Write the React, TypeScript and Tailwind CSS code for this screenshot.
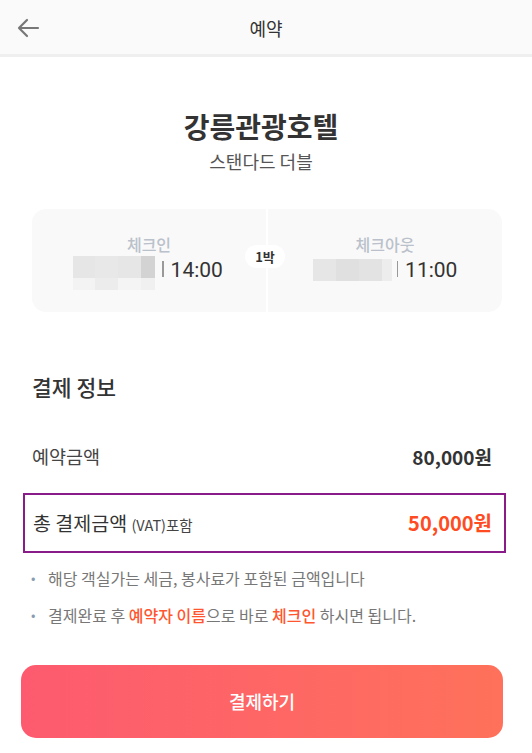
import React from "react";

const font = { fontFamily: '"Noto Sans CJK KR", "Noto Sans", Roboto, sans-serif' };

function Mosaic({ cells, rows }: { cells: number[]; rows: string[][] }) {
  return (
    <div className="flex flex-col">
      {rows.map((r, i) => (
        <div key={i} className="flex" style={{ height: i === 0 ? 22 : 12 }}>
          {r.map((c, j) => (
            <div key={j} style={{ width: cells[j], background: c }} />
          ))}
        </div>
      ))}
    </div>
  );
}

export default function App() {
  return (
    <div className="w-[532px] h-[753px] bg-white text-[#333] overflow-hidden" style={font}>
      {/* Header */}
      <div className="relative h-[57px] bg-[#fafafa] border-b-[3px] border-[#efefef] flex items-center justify-center">
        <svg className="absolute left-[16px] top-[17px]" width="24" height="22" viewBox="0 0 24 22" fill="none">
          <path d="M22 11H3M11 3L3 11L11 19" stroke="#777" strokeWidth="2.2" strokeLinecap="round" strokeLinejoin="round" />
        </svg>
        <span className="text-[18px] text-[#333] leading-none mt-[1px]">예약</span>
      </div>

      {/* Hotel */}
      <div className="flex flex-col items-center pr-[10px] pt-[50px]">
        <div className="text-[28px] font-semibold leading-[38px] text-[#333]">강릉관광호텔</div>
        <div className="text-[18px] leading-[26px] text-[#555] mt-[3px]">스탠다드 더블</div>
      </div>

      {/* Card */}
      <div className="relative ml-[32px] w-[470px] h-[103px] mt-[35px] rounded-[14px] bg-[#f9f9f9] flex">
        <div className="flex-1 flex flex-col items-center pt-[24px]">
          <div className="text-[16px] leading-[22px] font-medium text-[#bac1cb]">체크인</div>
          <div className="flex items-start mt-[1px] -ml-[2px]">
            <Mosaic
              cells={[22, 23, 23, 14]}
              rows={[
                ["#e6e6e6", "#e8e8e8", "#e6e6e6", "#d3d3d3"],
                ["#f3f3f3", "#ececec", "#f4f4f4", "#f0f0f0"],
              ]}
            />
            <div className="w-[1.5px] h-[16px] bg-[#999] ml-[7px] mt-[5px]" />
            <div className="text-[21px] leading-[28px] text-[#333] ml-[7px]" style={{ fontFamily: 'Roboto, "Noto Sans", sans-serif' }}>14:00</div>
          </div>
        </div>
        <div className="w-[2px] bg-white" />
        <div className="flex-1 flex flex-col items-center pt-[24px]">
          <div className="text-[16px] leading-[22px] font-medium text-[#bac1cb]">체크아웃</div>
          <div className="flex items-start mt-[1px]">
            <div className="mt-[3px]">
              <Mosaic cells={[23, 23, 23, 10]} rows={[["#e6e6e6", "#e0e0e0", "#e3e3e3", "#ededed"]]} />
            </div>
            <div className="w-[1.5px] h-[16px] bg-[#999] ml-[5px] mt-[5px]" />
            <div className="text-[21px] leading-[28px] text-[#333] ml-[7px]" style={{ fontFamily: 'Roboto, "Noto Sans", sans-serif' }}>11:00</div>
          </div>
        </div>
        <div className="absolute left-[213px] top-[36px] w-[40px] h-[23px] rounded-full bg-white flex items-center justify-center">
          <span className="text-[13px] font-bold leading-none text-[#333]">1박</span>
        </div>
      </div>

      {/* Payment info */}
      <div className="pl-[32px] pr-[40px] mt-[61px]">
        <div className="text-[21.5px] font-medium leading-[28px] text-[#333]">결제 정보</div>
        <div className="flex justify-between items-center mt-[42px] h-[28px]">
          <span className="text-[18.5px] text-[#444]">예약금액</span>
          <span className="text-[19px] font-bold text-[#333]">80,000원</span>
        </div>
      </div>

      <div className="ml-[23px] w-[483px] h-[60px] mt-[22px] border-2 border-[#8a1c8a] flex items-center justify-between pl-[8px] pr-[12px]">
        <span className="text-[19.5px] text-[#333] leading-none">
          총 결제금액 <span className="text-[14.5px] text-[#444]">(VAT)포함</span>
        </span>
        <span className="text-[20px] font-bold text-[#ff4b22] leading-none">50,000원</span>
      </div>

      <div className="pl-[31px] pr-[10px] mt-[14px] text-[16px] text-[#777]">
        <div className="flex items-center h-[22px]">
          <span className="w-[17px] text-[#8a9bb0] text-[13px]">•</span>
          <span>해당 객실가는 세금, 봉사료가 포함된 금액입니다</span>
        </div>
        <div className="flex items-center h-[22px] mt-[15px]">
          <span className="w-[17px] text-[#8a9bb0] text-[13px]">•</span>
          <span>
            결제완료 후 <span className="text-[#ff5630] font-medium">예약자 이름</span>으로 바로{" "}
            <span className="text-[#ff5630] font-medium">체크인</span> 하시면 됩니다.
          </span>
        </div>
      </div>

      <div className="ml-[21px] w-[482px] h-[73px] mt-[39px] rounded-[15px] bg-gradient-to-r from-[#fd5a6f] to-[#ff715a] flex items-center justify-center">
        <span className="text-[18px] font-medium text-white">결제하기</span>
      </div>
    </div>
  );
}
